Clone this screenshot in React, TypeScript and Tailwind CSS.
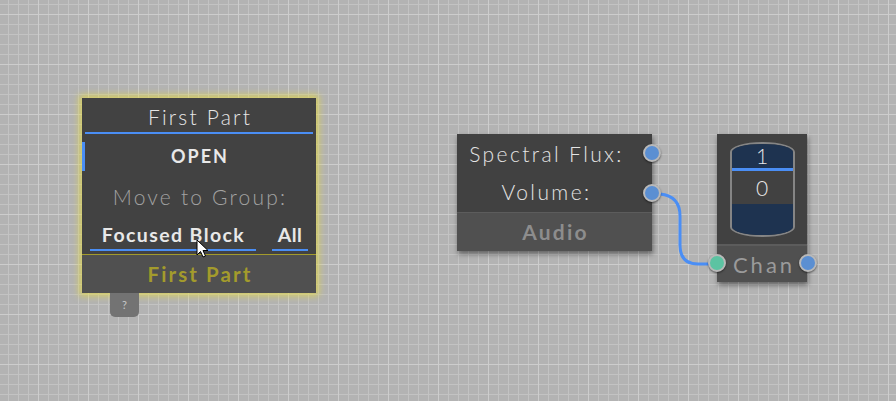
import React from "react";

const font = { fontFamily: "Lato, 'Open Sans', sans-serif" };

function Port({ color }: { color: "blue" | "green" }) {
  return (
    <div
      className={`w-[18px] h-[18px] rounded-full border-2 border-[#b9b9b9] shadow-[0_1px_2px_rgba(0,0,0,0.5)] ${
        color === "blue" ? "bg-[#5b8fd2]" : "bg-[#5cc3a2]"
      }`}
    />
  );
}

function Grid() {
  return (
    <svg className="absolute inset-0" width="896" height="401">
      <defs>
        <pattern id="minor" x="8" y="4" width="10" height="10" patternUnits="userSpaceOnUse">
          <path d="M0.5 0 V10 M0 0.5 H10" stroke="#c3c3c3" strokeWidth="1" fill="none" />
        </pattern>
        <pattern id="major" x="38" y="14" width="50" height="50" patternUnits="userSpaceOnUse">
          <path d="M0.5 0 V50 M0 0.5 H50" stroke="#cdcdcd" strokeWidth="1" fill="none" />
        </pattern>
      </defs>
      <rect width="896" height="401" fill="#b3b3b3" />
      <rect width="896" height="401" fill="url(#minor)" />
      <rect width="896" height="401" fill="url(#major)" />
    </svg>
  );
}

export default function App() {
  return (
    <div className="relative w-[896px] h-[401px] overflow-hidden bg-[#b3b3b3]" style={font}>
      <Grid />

      {/* wire */}
      <svg className="absolute inset-0 pointer-events-none" width="896" height="401">
        <path
          d="M 660 194 Q 680 196 680 216 L 680 245 Q 680 264 698 264 L 710 264"
          stroke="#4a8ef5"
          strokeWidth="3"
          fill="none"
        />
      </svg>

      {/* First Part block */}
      <div className="absolute left-[82px] top-[98px] w-[234px] h-[195px] bg-[#424242] flex flex-col shadow-[0_0_7px_3px_rgba(225,215,70,0.75)]">
        <div className="h-[34px] flex items-center justify-center text-[21px] font-light text-[#e6e6e6] pt-[4px] tracking-[2.2px] pl-[2px]">First Part</div>
        <div className="h-[2px] mx-[3px] bg-[#4a8ef5]" />
        <div className="h-[8px]" />
        <div className="relative h-[29px] flex items-center justify-center text-[18px] font-bold tracking-[2px] pl-[2px] text-[#e8e8e8]">
          <div className="absolute left-0 top-0 w-[3px] h-full bg-[#4a8ef5]" />
          OPEN
        </div>
        <div className="h-[52px] flex items-center justify-center text-[21px] font-light text-[#a3a3a3] tracking-[2.2px] pl-[2px]">Move to Group:</div>
        <div className="h-[26px] flex items-end px-[8px] pb-[3px] gap-[16px] text-[19.5px] font-bold text-[#e8e8e8]">
          <div className="w-[166px] flex justify-center leading-[23px] tracking-[1.4px] pl-[1px]">Focused Block</div>
          <div className="w-[36px] flex justify-center leading-[23px] tracking-[0.5px]">All</div>
        </div>
        <div className="flex px-[8px] gap-[16px]">
          <div className="w-[166px] h-[2px] bg-[#4a8ef5]" />
          <div className="w-[36px] h-[2px] bg-[#4a8ef5]" />
        </div>
        <div className="h-[3px]" />
        <div className="h-[1px] bg-[#a39b2c]" />
        <div className="flex-1 bg-[#505050] flex items-center justify-center text-[20.5px] font-bold text-[#a39b2c] tracking-[2.1px] pl-[2px]">
          First Part
        </div>
      </div>
      {/* ? tab */}
      <div className="absolute left-[110px] top-[293px] w-[29px] h-[24px] bg-[#737373] rounded-b-[5px] flex items-center justify-center text-[11px] text-[#c8c8c8]">
        ?
      </div>

      {/* cursor */}
      <svg className="absolute left-[196px] top-[239px]" width="14" height="20" viewBox="0 0 14 20">
        <path d="M1 1 L1 16 L4.5 12.5 L7 18 L9.5 17 L7 11.5 L12 11.5 Z" fill="#ffffff" stroke="#000000" strokeWidth="1" strokeLinejoin="round" />
      </svg>

      {/* Audio node */}
      <div className="absolute left-[457px] top-[134px] w-[195px] h-[117px] flex flex-col shadow-[1px_3px_5px_rgba(0,0,0,0.45)]">
        <div className="flex-1 bg-[#414141] flex flex-col pt-[1px]">
          <div className="h-[38px] flex items-center justify-center pr-[16px] text-[21px] font-light text-[#e4e4e4] tracking-[2.4px]">Spectral Flux:</div>
          <div className="h-[38px] flex items-center justify-center pr-[16px] text-[21px] font-light text-[#e4e4e4] tracking-[2.4px]">Volume:</div>
        </div>
        <div className="h-[1px] bg-[#5c5c5c]" />
        <div className="h-[38px] bg-[#505050] flex items-center justify-center text-[21px] font-bold text-[#8d8d8d] tracking-[2.2px] pl-[2px]">Audio</div>
        <div className="absolute right-[-9px] top-[10px]">
          <Port color="blue" />
        </div>
        <div className="absolute right-[-9px] top-[50px]">
          <Port color="blue" />
        </div>
      </div>

      {/* Chan node */}
      <div className="absolute left-[717px] top-[134px] w-[90px] h-[148px] flex flex-col shadow-[1px_3px_5px_rgba(0,0,0,0.45)]">
        <div className="h-[110px] bg-[#414141] flex justify-center pt-[8px]">
          <div className="w-[65px] h-[95px] border-2 border-[#858585] rounded-[32px/10px] overflow-hidden flex flex-col">
            <div className="h-[24px] bg-[#1e3350] flex items-center justify-center text-[21px] font-light text-[#e8e8e8]">1</div>
            <div className="h-[3px] bg-[#4a8ef5]" />
            <div className="h-[33px] bg-[#414141] flex items-center justify-center text-[21px] font-light text-[#e8e8e8]">0</div>
            <div className="flex-1 bg-[#1e3350]" />
          </div>
        </div>
        <div className="h-[2px] bg-[#5c5c5c]" />
        <div className="flex-1 bg-[#505050] flex items-center justify-center text-[22px] text-[#9a9a9a] tracking-[3px] pl-[4px]">Chan</div>
        <div className="absolute left-[-9px] top-[120px]">
          <Port color="green" />
        </div>
        <div className="absolute right-[-10px] top-[120px]">
          <Port color="blue" />
        </div>
      </div>
    </div>
  );
}
